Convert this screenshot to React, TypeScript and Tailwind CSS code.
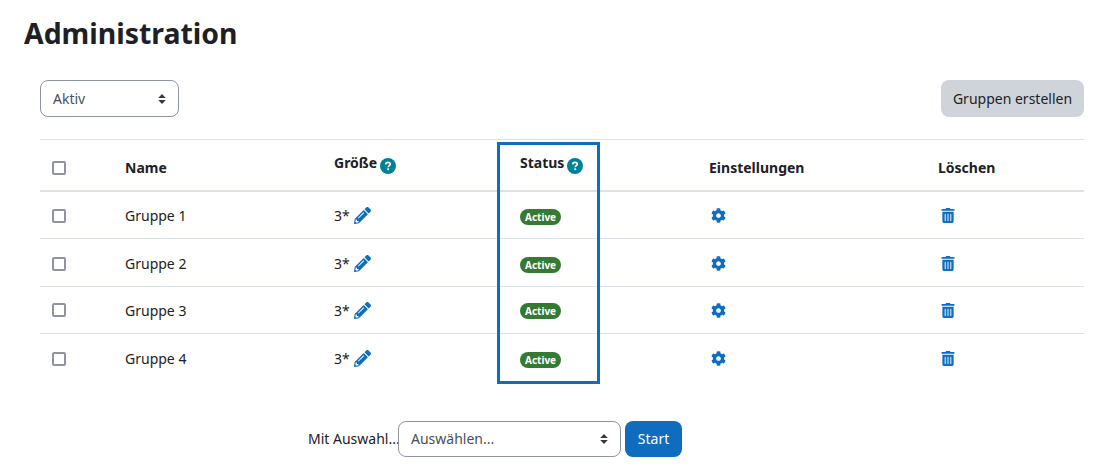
import { FaCog, FaPencilAlt, FaTrashAlt } from 'react-icons/fa';

const groups = ['Gruppe 1', 'Gruppe 2', 'Gruppe 3', 'Gruppe 4'];

const SortArrows = () => (
  <svg width="8" height="10" viewBox="0 0 8 10" className="shrink-0 text-[#343a40]">
    <path d="M4 0 L7.8 4 H0.2 Z M0.2 6 H7.8 L4 10 Z" fill="currentColor" />
  </svg>
);

const Checkbox = () => (
  <span className="block h-[14px] w-[14px] rounded-[2px] border-2 border-[#8f959e] bg-white" />
);

const HelpIcon = () => (
  <svg viewBox="0 0 16 16" className="mt-[6px] h-4 w-4 shrink-0">
    <circle cx="8" cy="8" r="8" fill="#008196" />
    <path d="M5.7 6.4 C5.8 5 6.8 4.4 8 4.4 C9.3 4.4 10.3 5.1 10.3 6.3 C10.3 7.7 8.2 7.7 8.2 9.2" fill="none" stroke="#fff" strokeWidth="1.6" />
    <rect x="7.3" y="10.3" width="1.8" height="1.8" fill="#fff" />
  </svg>
);

const App = () => {
  return (
    <div className="relative h-[471px] w-[1107px] overflow-hidden bg-white font-['Noto_Sans','Open_Sans',sans-serif] text-[14px] text-[#1d2125]">
      <h1 className="pl-6 pt-[14px] text-[28.4px] leading-[38px] font-bold">Administration</h1>

      <div className="mt-[28px] ml-10 mr-[23px]">
        <div className="flex items-center justify-between">
          <div className="flex h-[37px] w-[139px] items-center justify-between rounded-lg border border-[#8f959e] pl-3 pr-3 text-[#495057]">
            <span>Aktiv</span>
            <SortArrows />
          </div>
          <button className="h-[37px] w-[143px] rounded-lg bg-[#ced4da] text-[#1d2125]">Gruppen erstellen</button>
        </div>

        <table className="mt-[22px] w-[1044px] table-fixed border-collapse">
          <colgroup>
            <col className="w-[73px]" />
            <col className="w-[209px]" />
            <col className="w-[186px]" />
            <col className="w-[189px]" />
            <col className="w-[229px]" />
            <col className="w-[158px]" />
          </colgroup>
          <thead>
            <tr className="h-[51px] border-t border-b-2 border-t-[#dee2e6] border-b-[#dee2e6] text-left font-bold">
              <th className="px-3 pt-[6px]"><Checkbox /></th>
              <th className="px-3 pt-[6px]">Name</th>
              <th className="px-3 pb-[4px]">
                <span className="flex items-center gap-[3px]">Größe <HelpIcon /></span>
              </th>
              <th className="px-3 pb-[4px]">
                <span className="flex items-center gap-[3px]">Status <HelpIcon /></span>
              </th>
              <th className="px-3 pt-[6px]">Einstellungen</th>
              <th className="px-3 pt-[6px]">Löschen</th>
            </tr>
          </thead>
          <tbody>
            {groups.map((group, index) => (
              <tr
                key={group}
                className={`border-b border-[#dee2e6] last:border-b-0 ${index === 2 ? 'h-[47px]' : 'h-[48px] [&>td]:pt-[2px]'}`}
              >
                <td className="px-3"><Checkbox /></td>
                <td className="px-3">{group}</td>
                <td className="px-3">
                  <span className="flex items-center gap-1">
                    3* <FaPencilAlt className="h-[17px] w-[17px] text-[#0f6cbf]" />
                  </span>
                </td>
                <td className="px-3">
                  <span className="mb-[2px] inline-block rounded-full bg-[#357a32] px-[5px] text-[10px] leading-[16px] font-bold text-white">Active</span>
                </td>
                <td className="px-3"><FaCog className="ml-[2px] h-[15px] w-[15px] text-[#0f6cbf]" /></td>
                <td className="px-3"><FaTrashAlt className="ml-[3px] h-[15px] w-[14px] text-[#0f6cbf]" /></td>
              </tr>
            ))}
          </tbody>
        </table>

        <div className="mt-[39px] ml-[268px] flex items-center">
          <span className="w-[90px] whitespace-nowrap">Mit Auswahl...</span>
          <div className="flex h-[36px] w-[223px] items-center justify-between rounded-lg border border-[#8f959e] pl-3 pr-3 text-[#495057]">
            <span>Auswählen...</span>
            <SortArrows />
          </div>
          <button className="ml-1 h-[36px] w-[57px] rounded-lg bg-[#0f6cbf] text-white">Start</button>
        </div>
      </div>

      {/* Hervorhebung der Status-Spalte */}
      <div className="pointer-events-none absolute left-[497px] top-[142px] h-[242px] w-[103px] border-[3px] border-[#0f6cbf]" />
    </div>
  );
};

export default App;
